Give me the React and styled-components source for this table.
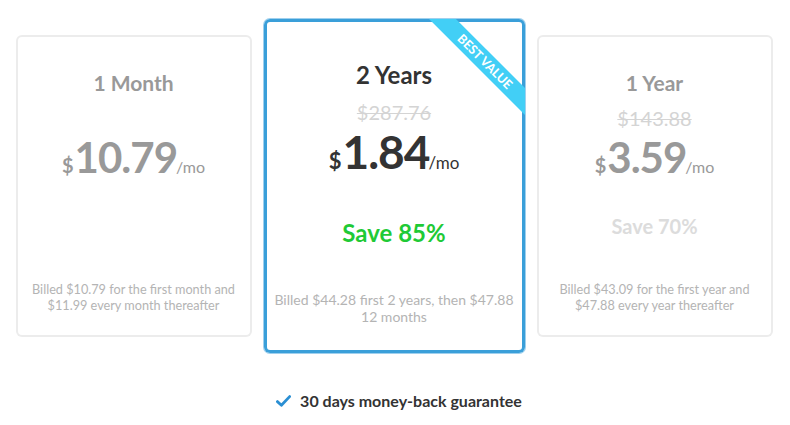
import React from 'react';
import styled, { createGlobalStyle } from 'styled-components';

const GlobalStyle = createGlobalStyle`
  body {
    margin: 0;
    background: #fff;
    font-family: Lato, "Open Sans", sans-serif;
  }
`;

const Page = styled.div`
  width: 790px;
  padding-top: 19px;
`;

const Plans = styled.div`
  display: flex;
  justify-content: center;
  align-items: center;
  gap: 12px;
  padding-right: 2px;
`;

const Card = styled.div`
  position: relative;
  box-sizing: border-box;
  width: ${(p) => (p.featured ? '261px' : '236px')};
  height: ${(p) => (p.featured ? '334px' : '302px')};
  display: flex;
  flex-direction: column;
  align-items: center;
  text-align: center;
  border-radius: 6px;
  overflow: hidden;
  background: #fff;
  box-shadow: ${(p) => (p.featured ? 'inset 0 0 0 3px #3a9fd9, 0 0 0 1px #9fd0ee' : 'inset 0 0 0 2px #ececec')};
  padding: ${(p) => (p.featured ? '42px 6px 28px' : '35px 6px 24px')};
`;

const Title = styled.div`
  font-size: ${(p) => (p.featured ? '24px' : '21px')};
  line-height: ${(p) => (p.featured ? '28px' : '26px')};
  font-weight: 700;
  color: ${(p) => (p.featured ? '#333' : '#999')};
`;

const OldPrice = styled.div`
  margin-top: ${(p) => (p.featured ? '11px' : '10px')};
  height: 24px;
  font-size: 20px;
  line-height: 24px;
  color: #d4d4d4;
  text-decoration: line-through;
  text-decoration-thickness: 1px;
`;

const PriceRow = styled.div`
  margin-top: ${(p) => (p.featured ? '2px' : '3px')};
  display: flex;
  align-items: baseline;
  justify-content: center;
  height: ${(p) => (p.featured ? '52px' : '48px')};
  color: ${(p) => (p.featured ? '#333' : '#999')};
`;

const Currency = styled.span`
  font-size: ${(p) => (p.featured ? '22px' : '20px')};
  font-weight: 700;
  margin-right: ${(p) => (p.featured ? '1px' : '1px')};
`;

const Amount = styled.span`
  font-size: ${(p) => (p.featured ? '46px' : '42px')};
  line-height: ${(p) => (p.featured ? '52px' : '48px')};
  font-weight: 700;
  letter-spacing: -1px;
`;

const PerMonth = styled.span`
  font-size: ${(p) => (p.featured ? '17px' : '16px')};
  font-weight: 400;
  margin-left: -1px;
`;

const Save = styled.div`
  margin-top: ${(p) => (p.featured ? '41px' : '33px')};
  font-size: ${(p) => (p.featured ? '24px' : '20px')};
  line-height: ${(p) => (p.featured ? '28px' : '24px')};
  font-weight: 700;
  color: ${(p) => (p.featured ? '#1fca36' : '#dcdcdc')};
`;

const Billed = styled.div`
  margin-top: auto;
  font-size: ${(p) => (p.featured ? '14px' : '12.7px')};
  line-height: ${(p) => (p.featured ? '17px' : '16px')};
  color: #b4b4b4;
  white-space: nowrap;
`;

const Ribbon = styled.div`
  position: absolute;
  top: 33px;
  right: -50px;
  width: 180px;
  height: 19px;
  background: #42cff6;
  color: #fff;
  font-size: 12.5px;
  font-weight: 700;
  line-height: 19px;
  text-transform: uppercase;
  text-align: center;
  transform: rotate(45deg);
`;

const Guarantee = styled.div`
  margin-top: 38px;
  display: flex;
  align-items: center;
  justify-content: center;
  gap: 9px;
  padding-left: 8px;
  font-size: 16px;
  font-weight: 700;
  color: #333;
`;

const CheckIcon = () => (
  <svg width="15" height="12" viewBox="0 0 15 12">
    <path d="M1.4 6.6 L5.4 10.2 L13.6 1.6" fill="none" stroke="#2a8fd3" strokeWidth="2.8" strokeLinecap="round" strokeLinejoin="round" />
  </svg>
);

const plans = [
  {
    title: '1 Month',
    old: null,
    amount: '10.79',
    save: null,
    billed: ['Billed $10.79 for the first month and', '$11.99 every month thereafter'],
  },
  {
    title: '2 Years',
    old: '$287.76',
    amount: '1.84',
    save: 'Save 85%',
    billed: ['Billed $44.28 first 2 years, then $47.88', '12 months'],
    featured: true,
  },
  {
    title: '1 Year',
    old: '$143.88',
    amount: '3.59',
    save: 'Save 70%',
    billed: ['Billed $43.09 for the first year and', '$47.88 every year thereafter'],
  },
];

const Plan = ({ plan }) => {
  const f = plan.featured;
  return (
    <Card featured={f}>
      {f && <Ribbon>Best Value</Ribbon>}
      <Title featured={f}>{plan.title}</Title>
      <OldPrice featured={f}>{plan.old}</OldPrice>
      <PriceRow featured={f}>
        <Currency featured={f}>$</Currency>
        <Amount featured={f}>{plan.amount}</Amount>
        <PerMonth featured={f}>/mo</PerMonth>
      </PriceRow>
      {plan.save && <Save featured={f}>{plan.save}</Save>}
      <Billed featured={f}>
        {plan.billed[0]}
        <br />
        {plan.billed[1]}
      </Billed>
    </Card>
  );
};

const App = () => (
  <Page>
    <GlobalStyle />
    <Plans>
      {plans.map((p) => (
        <Plan key={p.title} plan={p} />
      ))}
    </Plans>
    <Guarantee>
      <CheckIcon />
      30 days money-back guarantee
    </Guarantee>
  </Page>
);

export default App;
